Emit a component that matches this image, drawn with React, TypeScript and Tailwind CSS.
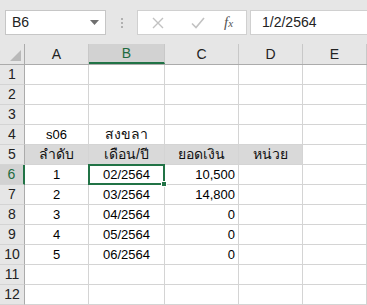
import React from "react"

const cols = ["A", "B", "C", "D", "E"]
const widths = ["w-[64px]", "w-[76px]", "w-[74px]", "w-[64px]", "w-[64px]"]

type Cell = { v?: string; align?: "c" | "r"; gray?: boolean; thai?: boolean }

const rows: Cell[][] = [
  [{}, {}, {}, {}, {}],
  [{}, {}, {}, {}, {}],
  [{}, {}, {}, {}, {}],
  [{ v: "s06", align: "c" }, { v: "สงขลา", align: "c", thai: true }, {}, {}, {}],
  [
    { v: "ลำดับ", align: "c", gray: true, thai: true },
    { v: "เดือน/ปี", align: "c", gray: true, thai: true },
    { v: "ยอดเงิน", align: "c", gray: true, thai: true },
    { v: "หน่วย", align: "c", gray: true, thai: true },
    {},
  ],
  [{ v: "1", align: "c" }, { v: "02/2564", align: "c" }, { v: "10,500", align: "r" }, {}, {}],
  [{ v: "2", align: "c" }, { v: "03/2564", align: "c" }, { v: "14,800", align: "r" }, {}, {}],
  [{ v: "3", align: "c" }, { v: "04/2564", align: "c" }, { v: "0", align: "r" }, {}, {}],
  [{ v: "4", align: "c" }, { v: "05/2564", align: "c" }, { v: "0", align: "r" }, {}, {}],
  [{ v: "5", align: "c" }, { v: "06/2564", align: "c" }, { v: "0", align: "r" }, {}, {}],
  [{}, {}, {}, {}, {}],
  [{}, {}, {}, {}, {}],
]

function Toolbar() {
  return (
    <div className="flex h-[44px] items-start bg-[#e6e6e6] pt-[10px]">
      <div className="ml-[5px] flex h-[25px] w-[101px] items-center justify-between border border-[#c6c6c6] bg-white pl-[6px] pr-[6px] text-[14px] text-[#222]">
        <span>B6</span>
        <svg width="9" height="5" viewBox="0 0 9 5">
          <path d="M0 0h9L4.5 5z" fill="#6f6f6f" />
        </svg>
      </div>
      <div className="flex h-[25px] w-[31px] flex-col items-center justify-center gap-[2px]">
        <span className="h-[2px] w-[2px] bg-[#b0b0b0]" />
        <span className="h-[2px] w-[2px] bg-[#b0b0b0]" />
        <span className="h-[2px] w-[2px] bg-[#b0b0b0]" />
      </div>
      <div className="flex h-[25px] w-[110px] items-center border border-[#d0d0d0] bg-white">
        <svg className="ml-[14px]" width="12" height="12" viewBox="0 0 12 12">
          <path d="M1 1l10 10M11 1L1 11" stroke="#c2c2c2" strokeWidth="1.4" />
        </svg>
        <svg className="ml-[27px]" width="14" height="12" viewBox="0 0 14 12">
          <path d="M1 6.5l4 4L13 1" stroke="#c2c2c2" strokeWidth="1.6" fill="none" />
        </svg>
        <span className="ml-[19px] font-['Liberation_Serif',serif] text-[15px] italic text-[#555]">
          f<span className="text-[11px]">x</span>
        </span>
      </div>
      <div className="ml-[3px] flex h-[25px] flex-1 items-center border border-r-0 border-[#d0d0d0] bg-white pl-[11px] text-[14px] text-[#222]">
        1/2/2564
      </div>
    </div>
  )
}

export default function App() {
  return (
    <div className="h-[305px] w-[367px] overflow-hidden bg-white font-['Liberation_Sans','Noto_Sans',sans-serif]">
      <Toolbar />
      {/* column headers */}
      <div className="flex h-[21px] border-b border-[#ababab] bg-[#e6e6e6] text-[14px] text-[#222]">
        <div className="relative w-[25px] shrink-0 border-r border-[#ababab]">
          <svg className="absolute bottom-[3px] right-[3px]" width="11" height="11" viewBox="0 0 11 11">
            <path d="M11 0v11H0z" fill="#b9b9b9" />
          </svg>
        </div>
        {cols.map((c, i) => (
          <div
            key={c}
            className={`${widths[i]} flex shrink-0 items-center justify-center border-r border-[#c8c8c8] ${
              c === "B" ? "border-b-2 border-b-[#217346] bg-[#d2d2d2] text-[#1e6b3f]" : ""
            }`}
          >
            {c}
          </div>
        ))}
      </div>
      {rows.map((r, ri) => {
        const sel = ri === 5
        return (
          <div key={ri} className="flex h-[20px] text-[13px] text-black">
            <div
              className={`flex w-[25px] shrink-0 items-center justify-center border-b border-r border-[#ababab] border-b-[#d4d4d4] text-[14px] ${
                sel ? "border-r-2 border-r-[#217346] bg-[#d2d2d2] text-[#1e6b3f]" : "bg-[#e6e6e6] text-[#222]"
              }`}
            >
              {ri + 1}
            </div>
            {r.map((cell, ci) => (
              <div
                key={ci}
                className={`${widths[ci]} relative flex shrink-0 items-center border-b border-r border-[#d4d4d4] px-[3px] ${
                  cell.align === "r" ? "justify-end" : "justify-center"
                } ${cell.gray ? "bg-[#d9d9d9]" : ""} ${cell.thai ? "text-[14px] text-[#111]" : ""}`}
              >
                {cell.v}
                {sel && ci === 1 && (
                  <div className="absolute -left-[1px] -top-[1px] z-10 h-[21px] w-[77px] border-2 border-[#217346]">
                    <div className="absolute -bottom-[4px] -right-[4px] h-[6px] w-[6px] border border-white bg-[#217346]" />
                  </div>
                )}
              </div>
            ))}
          </div>
        )
      })}
    </div>
  )
}
